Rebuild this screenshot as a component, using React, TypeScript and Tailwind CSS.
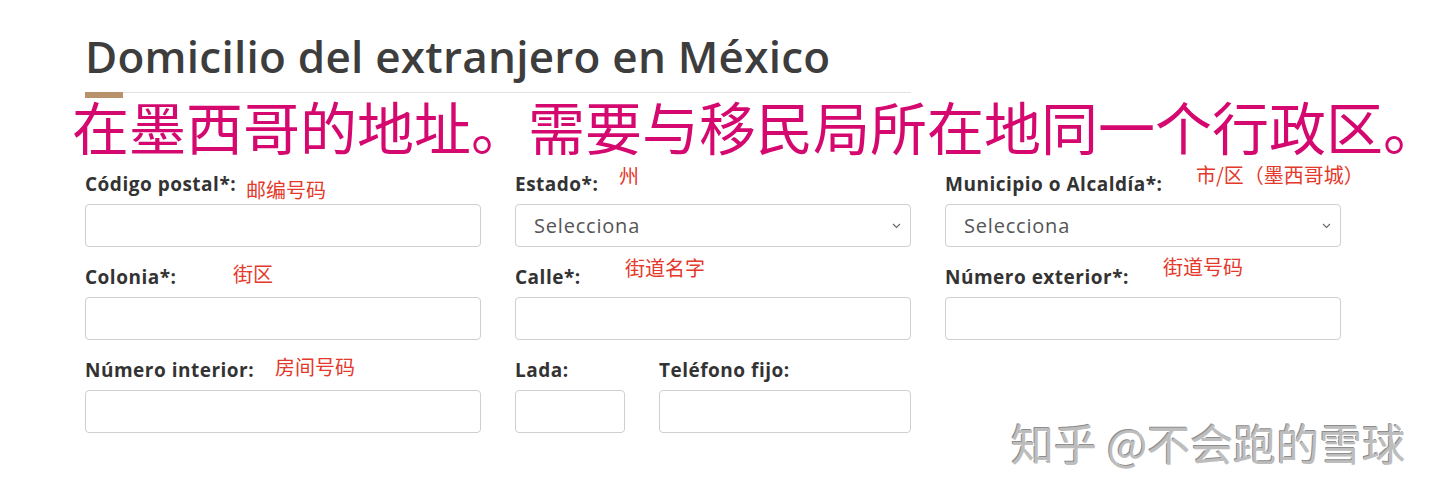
import React from "react";

const latin = '"Open Sans", "Noto Sans", "Liberation Sans", sans-serif';
const cjk = '"Noto Sans CJK SC", "Noto Sans", sans-serif';

function Chevron() {
  return (
    <svg width="9" height="6" viewBox="0 0 9 6" className="shrink-0">
      <path d="M1 1 L4.5 4.5 L8 1" fill="none" stroke="#666" strokeWidth="1.1" />
    </svg>
  );
}

function Label({ children }: { children: React.ReactNode }) {
  return (
    <div className="w-fit h-6 mb-2 text-[19px] leading-6 font-bold tracking-[0.5px] text-[#333] whitespace-nowrap" style={{ fontFamily: latin }}>
      {children}
    </div>
  );
}

function TextInput({ className = "" }: { className?: string }) {
  return <div className={`h-[43px] rounded-[4px] border border-[#cfcfcf] bg-white ${className}`} />;
}

function SelectInput() {
  return (
    <div className="h-[43px] rounded-[4px] border border-[#cfcfcf] bg-white flex items-center justify-between pl-[18px] pr-[9px]">
      <span className="text-[20px] tracking-[0.8px] text-[#555]" style={{ fontFamily: latin }}>Selecciona</span>
      <Chevron />
    </div>
  );
}

function Note({ children, className }: { children: React.ReactNode; className: string }) {
  return (
    <span className={`absolute text-[20px] leading-none text-[#e4392b] whitespace-nowrap ${className}`} style={{ fontFamily: cjk }}>
      {children}
    </span>
  );
}

export default function App() {
  return (
    <div className="relative w-[1440px] h-[502px] bg-white overflow-hidden">
      <div className="pl-[85px] pt-[30px]">
        <h1 className="text-[44px] leading-[52px] font-semibold tracking-[0.25px] text-[#3d3d3d] whitespace-nowrap" style={{ fontFamily: latin }}>
          Domicilio del extranjero en México
        </h1>
        <div className="flex items-start w-[826px] mt-[10px]">
          <div className="w-[38px] h-[6px] bg-[#b7926a]" />
          <div className="flex-1 h-px bg-[#e2e2e2]" />
        </div>
      </div>
      <div className="ml-[72px] w-max -mt-[5px] text-[57px] leading-[64px] text-[#d4086f] whitespace-nowrap" style={{ fontFamily: cjk }}>
        在墨西哥的地址。需要与移民局所在地同一个行政区。
      </div>
      <div className="pl-[85px] mt-[15px] grid grid-cols-[396px_396px_396px] gap-x-[34px] gap-y-[18px]">
        <div>
          <Label>Código postal*:</Label>
          <TextInput />
        </div>
        <div>
          <Label>Estado*:</Label>
          <SelectInput />
        </div>
        <div>
          <Label>Municipio o Alcaldía*:</Label>
          <SelectInput />
        </div>
        <div>
          <Label>Colonia*:</Label>
          <TextInput />
        </div>
        <div>
          <Label>Calle*:</Label>
          <TextInput />
        </div>
        <div>
          <Label>Número exterior*:</Label>
          <TextInput />
        </div>
        <div>
          <Label>Número interior:</Label>
          <TextInput />
        </div>
        <div className="flex gap-[34px]">
          <div className="w-[110px]">
            <Label>Lada:</Label>
            <TextInput />
          </div>
          <div className="flex-1">
            <Label>Teléfono fijo:</Label>
            <TextInput />
          </div>
        </div>
        <div />
      </div>

      <Note className="left-[246px] top-[180px]">邮编号码</Note>
      <Note className="left-[619px] top-[166px]">州</Note>
      <Note className="left-[1196px] top-[165px]">市/区（墨西哥城）</Note>
      <Note className="left-[233px] top-[264px]">街区</Note>
      <Note className="left-[625px] top-[258px]">街道名字</Note>
      <Note className="left-[1163px] top-[257px]">街道号码</Note>
      <Note className="left-[275px] top-[357px]">房间号码</Note>

      <div
        className="absolute left-[1011px] top-[421px] text-[43px] leading-none text-[#bdbdbd] whitespace-nowrap [text-shadow:1px_1px_0_#ffffff,-1px_-1px_0_#8e8e8e]"
        style={{ fontFamily: cjk }}
      >
        知乎 @不会跑的雪球
      </div>
    </div>
  );
}
